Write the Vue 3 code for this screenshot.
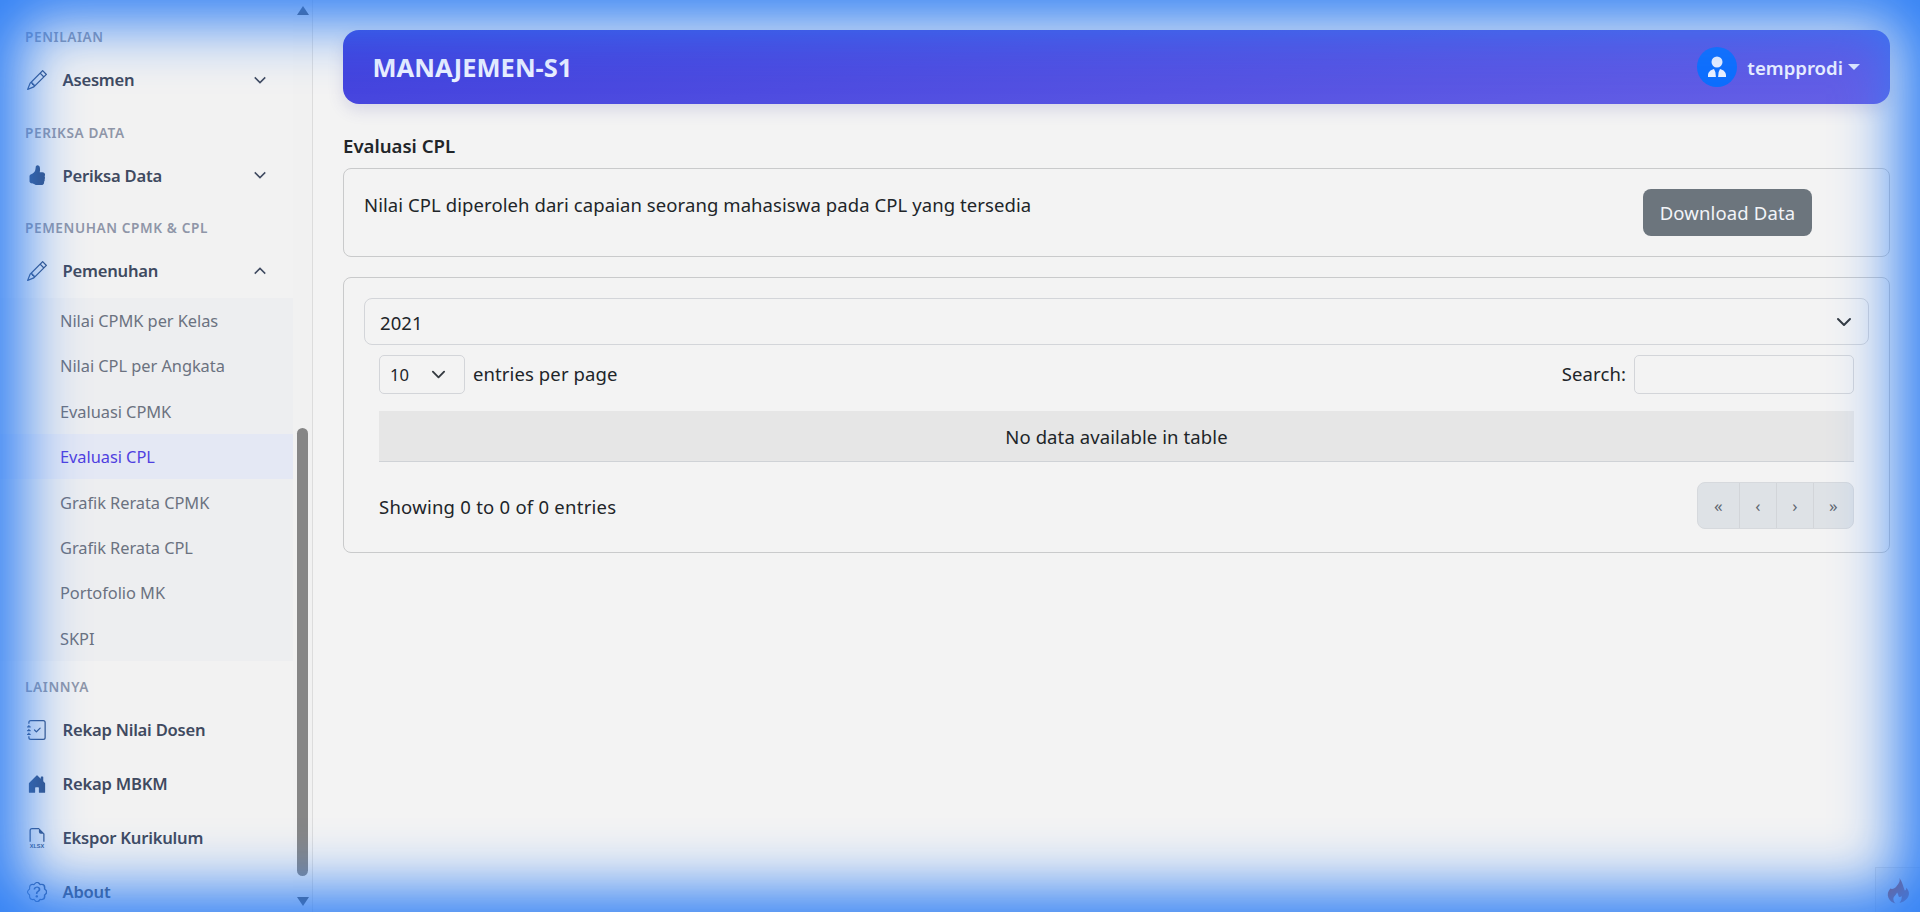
<script setup>
const icons = {
  pencil: ['M12.146.146a.5.5 0 0 1 .708 0l3 3a.5.5 0 0 1 0 .708l-10 10a.5.5 0 0 1-.168.11l-5 2a.5.5 0 0 1-.65-.65l2-5a.5.5 0 0 1 .11-.168l10-10zM11.207 2.5 13.5 4.793 14.793 3.5 12.5 1.207 11.207 2.5zm1.586 3L10.5 3.207 4 9.707V10h.5a.5.5 0 0 1 .5.5v.5h.5a.5.5 0 0 1 .5.5v.5h.293l6.5-6.5zm-9.761 5.175-.106.106-1.528 3.821 3.821-1.528.106-.106A.5.5 0 0 1 5 12.5V12h-.5a.5.5 0 0 1-.5-.5V11h-.5a.5.5 0 0 1-.468-.325z'],
  thumb: ['M6.956 1.745C7.021.81 7.908.087 8.864.325l.261.066c.463.116.874.456 1.012.965.22.816.533 2.511.062 4.51a9.84 9.84 0 0 1 .443-.051c.713-.065 1.669-.072 2.516.21.518.173.994.681 1.2 1.273.184.532.16 1.162-.234 1.733.058.119.103.242.138.363.077.27.113.567.113.856 0 .289-.036.586-.113.856-.039.135-.09.273-.16.404.169.387.107.819-.003 1.148a3.163 3.163 0 0 1-.488.901c.054.152.076.312.076.465 0 .305-.089.625-.253.912C13.1 15.522 12.437 16 11.5 16H8c-.605 0-1.07-.081-1.466-.218a4.82 4.82 0 0 1-.97-.484l-.048-.03c-.504-.307-.999-.609-2.068-.722C2.682 14.464 2 13.846 2 13V9c0-.85.685-1.432 1.357-1.615.849-.232 1.574-.787 2.132-1.41.56-.627.914-1.28 1.039-1.639.199-.575.356-1.539.428-2.59z'],
  journal: [
    'M10.854 6.146a.5.5 0 0 1 0 .708l-3 3a.5.5 0 0 1-.708 0l-1.5-1.5a.5.5 0 1 1 .708-.708L7.5 8.793l2.646-2.647a.5.5 0 0 1 .708 0z',
    'M3 0h10a2 2 0 0 1 2 2v12a2 2 0 0 1-2 2H3a2 2 0 0 1-2-2v-1h1v1a1 1 0 0 0 1 1h10a1 1 0 0 0 1-1V2a1 1 0 0 0-1-1H3a1 1 0 0 0-1 1v1H1V2a2 2 0 0 1 2-2z',
    'M1 5v-.5a.5.5 0 0 1 1 0V5h.5a.5.5 0 0 1 0 1h-2a.5.5 0 0 1 0-1H1zm0 3v-.5a.5.5 0 0 1 1 0V8h.5a.5.5 0 0 1 0 1h-2a.5.5 0 0 1 0-1H1zm0 3v-.5a.5.5 0 0 1 1 0v.5h.5a.5.5 0 0 1 0 1h-2a.5.5 0 0 1 0-1H1z'
  ],
  house: ['M6.5 14.5v-3.505c0-.245.25-.495.5-.495h2c.25 0 .5.25.5.5v3.5a.5.5 0 0 0 .5.5h4a.5.5 0 0 0 .5-.5v-7a.5.5 0 0 0-.146-.354L13 5.793V2.5a.5.5 0 0 0-.5-.5h-1a.5.5 0 0 0-.5.5v1.293L8.354 1.146a.5.5 0 0 0-.708 0l-6 6A.5.5 0 0 0 1.5 7.5v7a.5.5 0 0 0 .5.5h4a.5.5 0 0 0 .5-.5z'],
  xlsx: ['M14 4.5V11h-1V4.5h-2A1.5 1.5 0 0 1 9.5 3V1H4a1 1 0 0 0-1 1v9H2V2a2 2 0 0 1 2-2h5.5L14 4.5z'],
  patch: [
    'M5.255 5.786a.237.237 0 0 0 .241.247h.825c.138 0 .248-.113.266-.25.09-.656.54-1.134 1.342-1.134.686 0 1.314.343 1.314 1.168 0 .635-.374.927-.965 1.371-.673.489-1.206 1.06-1.168 1.987l.003.217a.25.25 0 0 0 .25.246h.811a.25.25 0 0 0 .25-.25v-.105c0-.718.273-.927 1.01-1.486.609-.463 1.244-.977 1.244-2.056 0-1.511-1.276-2.241-2.673-2.241-1.267 0-2.655.59-2.75 2.286zm1.557 5.763c0 .533.425.927 1.01.927.609 0 1.028-.394 1.028-.927 0-.552-.42-.94-1.029-.94-.584 0-1.009.388-1.009.94z',
    'M10.273 2.513l-.921-.944a1.89 1.89 0 0 0-2.704 0l-.92.944-1.32-.016a1.89 1.89 0 0 0-1.911 1.912l.016 1.318-.944.921a1.89 1.89 0 0 0 0 2.704l.944.92-.016 1.32a1.89 1.89 0 0 0 1.912 1.911l1.318-.016.921.944a1.89 1.89 0 0 0 2.704 0l.92-.944 1.32.016a1.89 1.89 0 0 0 1.911-1.912l-.016-1.318.944-.921a1.89 1.89 0 0 0 0-2.704l-.944-.92.016-1.32a1.89 1.89 0 0 0-1.912-1.911l-1.318.016zm.622-1.004.89-.011a2.89 2.89 0 0 1 2.924 2.924l-.01.89.636.622a2.89 2.89 0 0 1 0 4.134l-.637.622.011.89a2.89 2.89 0 0 1-2.924 2.924l-.89-.01-.622.636a2.89 2.89 0 0 1-4.134 0l-.622-.637-.89.011a2.89 2.89 0 0 1-2.924-2.924l.01-.89-.636-.622a2.89 2.89 0 0 1 0-4.134l.637-.622-.011-.89a2.89 2.89 0 0 1 2.924-2.924l.89.01.622-.636a2.89 2.89 0 0 1 4.134 0l.622.637z'
  ]
}

const sections = [
  { title: 'Penilaian', items: [{ label: 'Asesmen', icon: 'pencil', chevron: 'down' }] },
  { title: 'Periksa Data', items: [{ label: 'Periksa Data', icon: 'thumb', chevron: 'down' }] },
  {
    title: 'Pemenuhan CPMK & CPL',
    items: [{ label: 'Pemenuhan', icon: 'pencil', chevron: 'up' }],
    sub: ['Nilai CPMK per Kelas', 'Nilai CPL per Angkata', 'Evaluasi CPMK', 'Evaluasi CPL', 'Grafik Rerata CPMK', 'Grafik Rerata CPL', 'Portofolio MK', 'SKPI']
  },
  {
    title: 'Lainnya',
    items: [
      { label: 'Rekap Nilai Dosen', icon: 'journal' },
      { label: 'Rekap MBKM', icon: 'house' },
      { label: 'Ekspor Kurikulum', icon: 'xlsx' },
      { label: 'About', icon: 'patch' }
    ]
  }
]
const pages = ['«', '‹', '›', '»']
</script>

<template>
  <div class="shell">
    <aside class="sidebar">
      <nav class="nav">
        <template v-for="s in sections" :key="s.title">
          <div class="heading">{{ s.title }}</div>
          <a v-for="it in s.items" :key="it.label" class="item">
            <svg class="icon" viewBox="0 0 16 16" fill="currentColor">
              <path v-for="d in icons[it.icon]" :key="d" :d="d" />
              <text v-if="it.icon === 'xlsx'" x="8" y="15.6" text-anchor="middle" class="xlsx">XLSX</text>
            </svg>
            <span class="label">{{ it.label }}</span>
            <svg v-if="it.chevron" class="chev" :class="{ up: it.chevron === 'up' }" viewBox="0 0 16 16">
              <path d="M2 5l6 6 6-6" fill="none" stroke="currentColor" stroke-width="1.7" />
            </svg>
          </a>
          <div v-if="s.sub" class="sub">
            <a v-for="l in s.sub" :key="l" class="subitem" :class="{ active: l === 'Evaluasi CPL' }">{{ l }}</a>
          </div>
        </template>
      </nav>
      <div class="scrollbar">
        <span class="arrow top"></span>
        <span class="thumb"></span>
        <span class="arrow bottom"></span>
      </div>
    </aside>

    <main class="main">
      <header class="topbar">
        <h1 class="brand">MANAJEMEN-S1</h1>
        <div class="user">
          <span class="avatar">
            <svg viewBox="0 0 24 24" width="24" height="24" fill="#eef2ff">
              <circle cx="12" cy="7" r="5.5" />
              <path d="M3 22v-1.500c0-3.200 2.300-5.600 6-6.500l1.400 3.200L10.900 22zM21 22v-1.500c0-3.200-2.300-5.600-6-6.500l-1.400 3.200L13.100 22z" />
            </svg>
          </span>
          <span class="username">tempprodi</span>
          <span class="caret"></span>
        </div>
      </header>

      <h2 class="page-title">Evaluasi CPL</h2>

      <section class="card intro">
        <p class="intro-text">Nilai CPL diperoleh dari capaian seorang mahasiswa pada CPL yang tersedia</p>
        <button class="download">Download Data</button>
      </section>

      <section class="card data">
        <div class="year">
          <span class="txt">2021</span>
          <svg class="sel-chev" viewBox="0 0 16 16"><path d="M2 5l6 6 6-6" fill="none" stroke="#343a40" stroke-width="2" stroke-linecap="round" stroke-linejoin="round" /></svg>
        </div>
        <div class="controls">
          <div class="length">
            <div class="per">
              <span>10</span>
              <svg class="per-chev" viewBox="0 0 16 16"><path d="M2 5l6 6 6-6" fill="none" stroke="#343a40" stroke-width="2" stroke-linecap="round" stroke-linejoin="round" /></svg>
            </div>
            <span class="lift">entries per page</span>
          </div>
          <label class="search">
            <span class="lift">Search:</span>
            <input class="search-input" type="text" />
          </label>
        </div>
        <div class="empty">No data available in table</div>
        <div class="foot">
          <span class="txt showing">Showing 0 to 0 of 0 entries</span>
          <div class="pager">
            <span v-for="p in pages" :key="p" class="page">{{ p }}</span>
          </div>
        </div>
      </section>
    </main>

    <div class="debug">
      <svg viewBox="0 0 24 28" width="23" height="27" fill="#c83a0a">
        <path d="M13 1c1 4-1 6-3 8.500C8 12 5.500 13 3.500 12 1 15 0 18 1.500 21.500 3 25 6 27 9 27.500 7 26 6 23 7 21c.8-1.700 2.600-2.600 3.500-5 1.500 1.500 1 3.500 2 4.500 1 .8 2 .2 2.500-1 .8 2 .2 5-2 7.500 4-.7 8-3.500 9.500-7.500 1.300-3.500-.5-6.500-2.500-8.500.2 1.500-.3 2.800-1.500 3C17 10 16 5 13 1z" />
      </svg>
    </div>
    <div class="vignette"></div>
  </div>
</template>

<style>
html, body { margin: 0; background: #f3f3f3; }
</style>

<style scoped>
.shell {
  position: relative;
  display: flex;
  width: 100%;
  height: 100vh;
  overflow: hidden;
  background: #f3f3f3;
  font-family: "Noto Sans", "Open Sans", sans-serif;
  color: #212529;
}
.sidebar {
  display: flex;
  flex: 0 0 313px;
  height: 100%;
  overflow: hidden;
  box-sizing: border-box;
  border-right: 1px solid #dcdcdc;
  background: #f2f2f2;
}
.nav {
  flex: 0 0 293px;
  box-sizing: border-box;
  padding-top: 11px;
}
.heading {
  box-sizing: border-box;
  height: 41.6px;
  padding: 18px 0 0 25px;
  font-size: 13.6px;
  line-height: 16px;
  font-weight: 600;
  letter-spacing: .6px;
  text-transform: uppercase;
  color: #8f96a8;
}
.item {
  display: flex;
  align-items: center;
  box-sizing: border-box;
  height: 54px;
  padding: 0 26px 0 27px;
  color: #3f4a60;
}
.icon {
  flex: 0 0 20px;
  width: 20px;
  height: 20px;
  margin-right: 15.5px;
  color: #34507e;
}
.xlsx {
  font-family: "Liberation Sans", sans-serif;
  font-size: 4.4px;
  font-weight: 700;
}
.label {
  font-size: 16.6px;
  font-weight: 600;
  letter-spacing: -.22px;
}
.chev {
  width: 14px;
  height: 14px;
  margin-left: auto;
  color: #3f4a60;
}
.chev.up { transform: rotate(180deg); }
.sub { background: #edeef0; }
.subitem {
  display: flex;
  align-items: center;
  box-sizing: border-box;
  height: 45.4px;
  padding-left: 60px;
  font-size: 16.4px;
  letter-spacing: -.05px;
  color: #6b7280;
}
.subitem.active { background: #e4e8f4; color: #4f3fe0; }
.scrollbar {
  display: flex;
  flex-direction: column;
  align-items: center;
  flex: 1;
  padding-bottom: 6px;
  background: #f1f1f1;
}
.arrow { width: 0; height: 0; border-left: 6px solid transparent; border-right: 6px solid transparent; }
.arrow.top { margin-top: 6px; border-bottom: 9px solid #505050; }
.arrow.bottom { margin-top: auto; border-top: 9px solid #505050; }
.thumb {
  width: 11px;
  height: 448px;
  margin-top: 413px;
  border-radius: 6px;
  background: #868686;
}
.main {
  flex: 1;
  min-width: 0;
  box-sizing: border-box;
  padding: 30px 30px 0;
}
.topbar {
  display: flex;
  align-items: center;
  justify-content: space-between;
  box-sizing: border-box;
  height: 74px;
  padding: 0 30px 0 29.5px;
  border-radius: 16px;
  background: linear-gradient(170deg, #3f3fdc, #6560e6);
  box-shadow: 0 6px 16px rgba(70, 70, 160, .16);
  color: #eef2ff;
}
.brand {
  margin: 0;
  font-size: 25.5px;
  font-weight: 700;
}
.user { display: flex; align-items: center; }
.avatar {
  display: flex;
  align-items: center;
  justify-content: center;
  width: 40px;
  height: 40px;
  border-radius: 50%;
  background: #0d6efd;
}
.username {
  margin-left: 10px;
  font-size: 18.6px;
  font-weight: 600;
}
.caret {
  margin-left: 5px;
  border-top: 6px solid #eef2ff;
  border-left: 6px solid transparent;
  border-right: 6px solid transparent;
}
.page-title {
  margin: 29px 0 9px;
  font-size: 18.6px;
  line-height: 26px;
  font-weight: 600;
}
.card {
  box-sizing: border-box;
  border: 1px solid #c9cacb;
  border-radius: 8px;
}
.intro {
  display: flex;
  align-items: flex-start;
  justify-content: space-between;
  height: 89px;
  padding: 20px 77px 20px 20px;
}
.intro-text {
  margin: 3px 0 0;
  font-size: 18.5px;
  line-height: 26px;
  letter-spacing: .08px;
}
.download {
  width: 169px;
  height: 47px;
  padding: 0;
  border: 0;
  border-radius: 8px;
  background: #6c757d;
  color: #f2f4f8;
  font: inherit;
  font-size: 18.5px;
  letter-spacing: .15px;
}
.data {
  height: 276px;
  margin-top: 20px;
  padding: 20px;
  font-size: 18.5px;
  letter-spacing: .1px;
}
.txt { padding-top: 2px; }
.showing { letter-spacing: .24px; }
.lift { padding-bottom: 2px; }
.year {
  display: flex;
  align-items: center;
  justify-content: space-between;
  box-sizing: border-box;
  height: 47px;
  padding: 0 16px 0 15px;
  border: 1px solid #d3d5d9;
  border-radius: 8px;
}
.sel-chev { width: 16px; height: 16px; }
.controls {
  display: flex;
  align-items: center;
  justify-content: space-between;
  margin-top: 10px;
  padding: 0 15px;
}
.length { display: flex; align-items: center; gap: 8px; }
.per {
  display: flex;
  align-items: center;
  justify-content: space-between;
  box-sizing: border-box;
  width: 86px;
  height: 39px;
  padding: 0 18px 0 10px;
  border: 1px solid #d3d5d9;
  border-radius: 5px;
  font-size: 16.6px;
}
.per-chev { width: 15px; height: 15px; }
.search { display: flex; align-items: center; gap: 8px; }
.search-input {
  box-sizing: border-box;
  width: 220px;
  height: 39px;
  border: 1px solid #d3d5d9;
  border-radius: 5px;
  background: transparent;
}
.empty {
  display: flex;
  align-items: center;
  justify-content: center;
  box-sizing: border-box;
  height: 51px;
  margin: 17px 15px 0;
  background: #e6e6e6;
  border-bottom: 1px solid #cfd2d6;
}
.foot {
  display: flex;
  align-items: center;
  justify-content: space-between;
  margin: 20px 15px 0;
}
.pager {
  display: flex;
  height: 47px;
  border: 1px solid #d6d9dd;
  box-sizing: border-box;
  border-radius: 8px;
  background: #dee2e6;
  overflow: hidden;
}
.page {
  display: flex;
  align-items: center;
  justify-content: center;
  box-sizing: border-box;
  width: 37px;
  font-size: 17px;
  color: #5f6872;
  border-left: 1px solid #d2d5d9;
}
.page:first-child { width: 41px; border-left: 0; }
.page:last-child { width: 40px; }
.debug {
  position: absolute;
  right: 0;
  bottom: 0;
  display: flex;
  align-items: center;
  justify-content: center;
  width: 45px;
  height: 45px;
  box-sizing: border-box;
  background: #eeeeee;
  border: 1px solid #dddddd;
  border-width: 1px 0 0 1px;
}
.vignette {
  position: absolute;
  inset: 0;
  pointer-events: none;
  box-shadow: inset 0 0 60px 22px #2f7ff5;
}
</style>
